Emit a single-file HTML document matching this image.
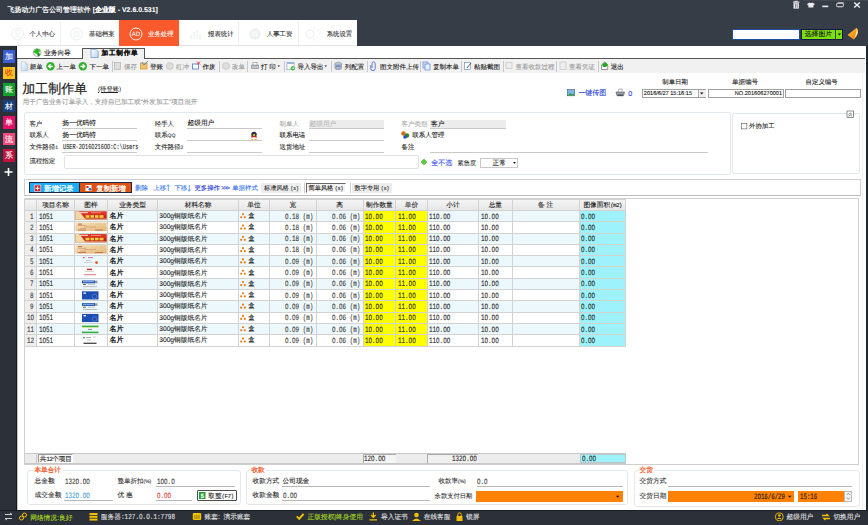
<!DOCTYPE html><html><head><meta charset="utf-8"><style>
*{margin:0;padding:0;box-sizing:border-box}
html,body{width:868px;height:525px;overflow:hidden;background:#fff}
body{position:relative;font-family:"Liberation Sans",sans-serif;font-size:6.7px;font-weight:500;color:#222;-webkit-text-stroke-width:0.1px;text-rendering:geometricPrecision}
div{position:absolute}
.t{white-space:nowrap;line-height:8px;transform:translateY(-4px)}
.m{font-family:"Liberation Mono",monospace}
.n{white-space:nowrap;line-height:8px;font-family:"Liberation Mono",monospace;transform-origin:0 50%;-webkit-text-stroke-width:0.1px;font-weight:400}
svg{position:absolute;overflow:visible}
</style></head><body>
<div style="left:0px;top:0px;width:868px;height:46px;background:#373d47"></div>
<div class="t" style="left:7.5px;top:11.0px;color:#fff;font-size:6.95px"><span style='font-weight:500;-webkit-text-stroke-width:0.2px'>飞扬动力广告公司管理软件</span> <b>[企业版 - V2.6.0.531]</b></div>
<svg style="left:0;top:0" width="868" height="20">
<rect x="803" y="0" width="65" height="0.8" fill="#454b55"/>
<g fill="#ececec">
<rect x="793" y="1.6" width="6.4" height="1.1"/><rect x="794.6" y="0.8" width="3.2" height="1"/><rect x="793.5" y="3.2" width="5.4" height="5.4"/>
<path d="M807.6 3.6 L809.8 2.6 L810.9 3.3 L812 2.6 L814.2 3.6 L814.6 5 L813.4 5.3 L813.4 7.6 L808.4 7.6 L808.4 5.3 L807.2 5 Z"/>
<rect x="822.3" y="5.6" width="6" height="1.6"/>
</g>
<g fill="#2e333c" opacity="0.9"><rect x="795" y="4" width="0.6" height="3.8"/><rect x="796.8" y="4" width="0.6" height="3.8"/></g>
<rect x="836.6" y="3.2" width="6.8" height="3.6" rx="1.2" fill="none" stroke="#e8e8e8" stroke-width="1"/>
<path d="M838 2.6 h5 a1 1 0 0 1 1 1" stroke="#e8e8e8" stroke-width="0.6" fill="none"/>
<path d="M854.2 2.4 L859.8 7.6 M859.8 2.4 L854.2 7.6" stroke="#f2f2f2" stroke-width="1.4"/>
</svg>
<div style="left:0px;top:20px;width:357px;height:26px;background:#fff;border-bottom:1px solid #e2e4e8"></div>
<div class="t" style="left:29.4px;top:35.0px;color:#333;font-size:6.4px;font-weight:400">个人中心</div>
<div style="left:59.5px;top:21px;width:1px;height:24px;background:#eef0f2"></div>
<div class="t" style="left:89px;top:35.0px;color:#333;font-size:6.4px;font-weight:400">基础档案</div>
<div style="left:119px;top:20px;width:59.5px;height:26px;background:#fa5a2c"></div>
<div class="t" style="left:148px;top:35.0px;color:#fff;font-size:6.4px;font-weight:400">业务处理</div>
<div style="left:178.5px;top:21px;width:1px;height:24px;background:#eef0f2"></div>
<div class="t" style="left:208px;top:35.0px;color:#333;font-size:6.4px;font-weight:400">报表统计</div>
<div style="left:238.0px;top:21px;width:1px;height:24px;background:#eef0f2"></div>
<div class="t" style="left:266.8px;top:35.0px;color:#333;font-size:6.4px;font-weight:400">人事工资</div>
<div style="left:297.5px;top:21px;width:1px;height:24px;background:#eef0f2"></div>
<div class="t" style="left:326.7px;top:35.0px;color:#333;font-size:6.4px;font-weight:400">系统设置</div>
<svg style="left:0;top:0" width="360" height="46">
<g fill="none" stroke="#eceeef" stroke-width="1">
<circle cx="17.5" cy="34" r="6"/><circle cx="17.5" cy="32.3" r="2.2"/><path d="M13.6 38.3 Q17.5 33.8 21.4 38.3"/>
<circle cx="76.5" cy="34" r="6"/><path d="M73.3 31 h6.4 M73.3 33 h6.4 M73.3 35 h6.4 M73.3 37 h6.4" stroke-width="0.8"/>
<path d="M191 39 v-4 M194 39 v-7 M197 39 v-9 M200 39 v-5" stroke-width="1.2"/>
<path d="M310 34 m-4 0 a4 4 0 1 0 8 0 a4 4 0 1 0 -8 0 M314 27.5 v2 M314 38.5 v2 M307.5 34 h2 M318.5 34 h2 M309.5 29.5 l1.4 1.4 M317.1 37.1 l1.4 1.4 M309.5 38.5 l1.4 -1.4 M317.1 30.9 l1.4 -1.4"/>
</g>
<circle cx="255" cy="34" r="5.8" fill="#eef0f1"/>
<path d="M253 31.5 v5 M255 31 v6 M257 31.5 v5" stroke="#fff" stroke-width="0.8"/>
<circle cx="136" cy="34" r="6" fill="none" stroke="#fff" stroke-width="0.9"/>
<text x="136" y="36.3" font-size="6.2" fill="#fff" text-anchor="middle" font-family="Liberation Sans">AD</text>
</svg>
<div style="left:731.8px;top:28.8px;width:68.5px;height:11.5px;background:#fff;border:1.2px solid #1e4f9c"></div>
<div style="left:800.9px;top:28.6px;width:42.5px;height:11.8px;background:#7ee00a;border:1px solid #141a48"></div>
<div style="left:835.2px;top:29.5px;width:1px;height:10px;background:#2a4a10"></div>
<div class="t" style="left:804.8px;top:35.3px;color:#111;font-size:6.8px">选择图片</div>
<svg style="left:0;top:0" width="868" height="46">
<path d="M837.8 33.6 h3.2 l-1.6 1.8 z" fill="#111"/>
<defs><linearGradient id="mg" x1="0" y1="0" x2="1" y2="1"><stop offset="0" stop-color="#ffd070"/><stop offset="0.5" stop-color="#f7a018"/><stop offset="1" stop-color="#e07000"/></linearGradient></defs>
<path d="M847.6 35 L856.6 27.8 Q860.5 33 853.6 39.6 Z" fill="url(#mg)"/><path d="M856.6 27.8 Q860.5 33 853.6 39.6 Q857 33 856.6 27.8 Z" fill="#ffe6a8"/>

</svg>
<div style="left:0px;top:46px;width:17px;height:464px;background:#2c3039"></div>
<div style="left:15.8px;top:46px;width:1.4px;height:464px;background:#161a24"></div>
<div style="left:2.6px;top:50.1px;width:12.6px;height:12.6px;background:#3a5ed6"></div>
<div class="t" style="left:4.9px;top:56.9px;color:#fff;font-size:8px;line-height:10px;transform:translateY(-5px)">加</div>
<div style="left:2.6px;top:66.65px;width:12.6px;height:12.6px;background:#f6c41c"></div>
<div class="t" style="left:4.9px;top:73.45px;color:#e8401a;font-size:8px;line-height:10px;transform:translateY(-5px)">收</div>
<div style="left:2.6px;top:83.2px;width:12.6px;height:12.6px;background:#12a02a"></div>
<div class="t" style="left:4.9px;top:90.0px;color:#fff;font-size:8px;line-height:10px;transform:translateY(-5px)">账</div>
<div style="left:2.6px;top:99.75px;width:12.6px;height:12.6px;background:#1b3f7c"></div>
<div class="t" style="left:4.9px;top:106.55px;color:#fff;font-size:8px;line-height:10px;transform:translateY(-5px)">材</div>
<div style="left:2.6px;top:116.30000000000001px;width:12.6px;height:12.6px;background:#e60f68"></div>
<div class="t" style="left:4.9px;top:123.10000000000001px;color:#fff;font-size:8px;line-height:10px;transform:translateY(-5px)">单</div>
<div style="left:2.6px;top:132.85px;width:12.6px;height:12.6px;background:#ef4a7c"></div>
<div class="t" style="left:4.9px;top:139.65px;color:#fff;font-size:8px;line-height:10px;transform:translateY(-5px)">流</div>
<div style="left:2.6px;top:149.4px;width:12.6px;height:12.6px;background:#c2123c"></div>
<div class="t" style="left:4.9px;top:156.20000000000002px;color:#fff;font-size:8px;line-height:10px;transform:translateY(-5px)">系</div>
<svg style="left:0;top:0" width="17" height="200"><path d="M4.5 172 h8 M8.5 168 v8" stroke="#fff" stroke-width="1.6"/></svg>
<div style="left:866px;top:46px;width:2px;height:464px;background:#22262e"></div>
<div style="left:17px;top:46px;width:849px;height:464px;background:#fff"></div>
<div style="left:862px;top:73px;width:0.8px;height:437px;background:#f2f2f2"></div>
<div style="left:17px;top:59px;width:1px;height:451px;background:#c4c4c4"></div>
<div style="left:17px;top:58px;width:65px;height:1.2px;background:#555"></div>
<div style="left:145px;top:58px;width:720px;height:1.2px;background:#555"></div>
<div style="left:82px;top:48px;width:63px;height:11.5px;background:#f1f1f1;border:1px solid #555;border-bottom:none;border-radius:1px 1px 0 0"></div>
<div class="t" style="left:44px;top:54.0px;color:#222;font-size:6.7px;font-weight:400">业务向导</div>
<div class="t" style="left:101.6px;top:54.2px;color:#111;font-weight:bold;font-size:6.6px;letter-spacing:0.75px;-webkit-text-stroke-width:0.15px">加工制作单</div>
<svg style="left:0;top:0" width="200" height="60">
<circle cx="37.2" cy="52.6" r="3.9" fill="#fff" stroke="#777" stroke-width="0.6"/><path d="M33.2 52 L36.5 48.6 L38.8 49.2 L40.3 51 L37 54.2 Z" fill="#28b820"/><ellipse cx="38.6" cy="54.6" rx="1.3" ry="1.8" fill="#1a8a1a"/>
<path d="M91 49.3 h4.8 l2.4 2.4 v5.8 h-7.2 z" fill="url(#dg)" stroke="#5a86c0" stroke-width="0.6"/>
</svg>
<div style="left:18px;top:59px;width:847px;height:14px;background:#f1f1f1"></div>
<div class="t" style="left:29.7px;top:67.6px;color:#222;font-size:6.5px">新单</div>
<div class="t" style="left:56.6px;top:67.6px;color:#222;font-size:6.5px">上一单</div>
<div class="t" style="left:89.6px;top:67.6px;color:#222;font-size:6.5px">下一单</div>
<div class="t" style="left:124px;top:67.6px;color:#999;font-size:6.5px">保存</div>
<div class="t" style="left:150px;top:67.6px;color:#222;font-size:6.5px">登账</div>
<div class="t" style="left:176px;top:67.6px;color:#999;font-size:6.5px">红冲</div>
<div class="t" style="left:202.5px;top:67.6px;color:#222;font-size:6.5px">作废</div>
<div class="t" style="left:231.9px;top:67.6px;color:#999;font-size:6.5px">改单</div>
<div class="t" style="left:261px;top:67.6px;color:#222;font-size:6.5px">打 印</div>
<div class="t" style="left:297.6px;top:67.6px;color:#222;font-size:6.5px">导入导出</div>
<div class="t" style="left:344.8px;top:67.6px;color:#222;font-size:6.5px">列配置</div>
<div class="t" style="left:380px;top:67.6px;color:#222;font-size:6.5px">图文附件上传</div>
<div class="t" style="left:433px;top:67.6px;color:#222;font-size:6.5px">复制本单</div>
<div class="t" style="left:474px;top:67.6px;color:#222;font-size:6.5px">粘贴截图</div>
<div class="t" style="left:515.6px;top:67.6px;color:#999;font-size:6.5px">查看收款过程</div>
<div class="t" style="left:569px;top:67.6px;color:#999;font-size:6.5px">查看凭证</div>
<div class="t" style="left:610.7px;top:67.6px;color:#222;font-size:6.5px">退出</div>
<div style="left:111.5px;top:60.5px;width:1px;height:11px;background:#c8c8c8"></div>
<div style="left:218.8px;top:60.5px;width:1px;height:11px;background:#c8c8c8"></div>
<div style="left:247.3px;top:60.5px;width:1px;height:11px;background:#c8c8c8"></div>
<div style="left:284.2px;top:60.5px;width:1px;height:11px;background:#c8c8c8"></div>
<div style="left:331px;top:60.5px;width:1px;height:11px;background:#c8c8c8"></div>
<div style="left:367.4px;top:60.5px;width:1px;height:11px;background:#c8c8c8"></div>
<div style="left:420px;top:60.5px;width:1px;height:11px;background:#c8c8c8"></div>
<div style="left:461.4px;top:60.5px;width:1px;height:11px;background:#c8c8c8"></div>
<div style="left:502.8px;top:60.5px;width:1px;height:11px;background:#c8c8c8"></div>
<div style="left:556px;top:60.5px;width:1px;height:11px;background:#c8c8c8"></div>
<div style="left:597.7px;top:60.5px;width:1px;height:11px;background:#c8c8c8"></div>
<svg style="left:0;top:0" width="700" height="80">
<defs><linearGradient id="dg" x1="0" y1="0" x2="1" y2="1"><stop offset="0" stop-color="#ffffff"/><stop offset="1" stop-color="#b8d4f0"/></linearGradient></defs><path d="M21.3 62 h4.2 l2.2 2.2 v6.4 h-6.4 z" fill="url(#dg)" stroke="#9ab4d8" stroke-width="0.5"/><path d="M25.5 62 v2.2 h2.2" fill="#dbe8f6" stroke="#9ab4d8" stroke-width="0.4"/>
<circle cx="50.5" cy="66.3" r="4.2" fill="#34b030"/><path d="M52.8 66.3 h-4.2 m2 -2 l-2 2 l2 2" stroke="#fff" stroke-width="1.3" fill="none"/>
<circle cx="82.8" cy="66.3" r="4.2" fill="#34b030"/><path d="M80.4 66.3 h4.2 m-2 -2 l2 2 l-2 2" stroke="#fff" stroke-width="1.3" fill="none"/>
<rect x="114.5" y="62.5" width="6" height="7" fill="#ddd" stroke="#aaa" stroke-width="0.6"/>
<rect x="140.5" y="63" width="6.5" height="6" fill="#f3c36a" stroke="#c58a2a" stroke-width="0.6"/><path d="M142 62 l2 3 l4 -4" stroke="#3a7ad0" stroke-width="0.8" fill="none"/>
<circle cx="169.8" cy="66" r="3.5" fill="#ddd" stroke="#bbb" stroke-width="0.6"/>
<rect x="192.5" y="64" width="6" height="5" fill="#fff" stroke="#3a6ac0" stroke-width="0.7"/><path d="M197 61.5 l3 3 m0 -3 l-3 3" stroke="#e02020" stroke-width="0.9"/>
<circle cx="226" cy="66" r="3.5" fill="#ddd" stroke="#bbb" stroke-width="0.6"/>
<path d="M251.5 65 h7 v3.5 h-7 z" fill="#bfc6cf" stroke="#6b7380" stroke-width="0.5"/><rect x="253" y="62.5" width="4" height="2.5" fill="#fff" stroke="#777" stroke-width="0.5"/>
<path d="M277.5 65.5 h2.5 l-1.25 1.5 z" fill="#222"/>
<rect x="287" y="62.3" width="7" height="7.4" fill="#fff" stroke="#7a9ac0" stroke-width="0.6"/><rect x="287" y="62.3" width="7" height="1.6" fill="#8fb0d8"/><circle cx="292.8" cy="68.3" r="2.1" fill="#38b038"/><path d="M291.6 68.3 h2.4 m-1 -1 l1 1 l-1 1" stroke="#fff" stroke-width="0.6" fill="none"/>
<path d="M324.5 65.5 h2.5 l-1.25 1.5 z" fill="#222"/>
<ellipse cx="338.2" cy="63.6" rx="3.3" ry="1.4" fill="#c9d6e6" stroke="#6a7f9a" stroke-width="0.5"/><path d="M334.9 63.6 v4.6 a3.3 1.4 0 0 0 6.6 0 v-4.6" fill="#a8b4c4" stroke="#6a7f9a" stroke-width="0.5"/><rect x="336" y="65.5" width="4.5" height="1" fill="#4a7acc"/>
<path d="M372 68 v-4.5 a1.6 1.6 0 0 1 3.2 0 v5 a2.2 2.2 0 0 1 -4.4 0 v-3.5" fill="none" stroke="#3a62c8" stroke-width="0.8"/>
<rect x="423" y="62" width="5" height="6" fill="#cfe0f6" stroke="#4a7acc" stroke-width="0.6"/><rect x="425" y="64" width="5" height="6" fill="#e7f0fb" stroke="#4a7acc" stroke-width="0.6"/>
<rect x="464.5" y="62.5" width="6" height="7" fill="#fff" stroke="#5a86c0" stroke-width="0.6"/><path d="M467 68 l4 -5" stroke="#333" stroke-width="0.8"/>
<rect x="506" y="62.5" width="6" height="6" fill="#eee" stroke="#bbb" stroke-width="0.6"/>
<rect x="560" y="62" width="6" height="7.5" fill="#eee" stroke="#bbb" stroke-width="0.6"/>
<path d="M601.5 65 L604.6 62 L607.7 65 L607.7 69.5 L601.5 69.5 Z" fill="#fff" stroke="#555" stroke-width="0.6"/><path d="M602 64.5 L605 62 L608 64.5 L606 67 L603 67 Z" fill="#2aa52a"/>
</svg>
<div class="t" style="left:22.3px;top:89.3px;color:#222;font-size:13px;line-height:14px;transform:translateY(-7px);-webkit-text-stroke-width:0.2px">加工制作单</div>
<div class="t" style="left:98px;top:89.8px;color:#222;font-size:6.3px;-webkit-text-stroke-width:0.05px"><span style="text-decoration:underline">(待登账)</span></div>
<div class="t" style="left:22.8px;top:103.0px;color:#999;font-size:6.55px;-webkit-text-stroke-width:0.1px">用于广告业务订单录入，支持自已加工或“外发加工”项目混开</div>
<svg style="left:0;top:0" width="868" height="110">
<rect x="567.3" y="89.6" width="7.4" height="6.2" fill="#7ab8e8" stroke="#4a5a70" stroke-width="0.6"/><path d="M567.6 95.5 l2.5 -2.6 l1.8 1.6 l1.4 -1 l1.1 1 v1 z" fill="#3a9a4a"/>
<path d="M616 92 h8.5 l-1 3.8 h-6.5 z" fill="#9aa4b0" stroke="#4b5460" stroke-width="0.6"/><path d="M618 92 l1 -3 h3.5 l-1 3 z" fill="#fff" stroke="#666" stroke-width="0.5"/><rect x="617.5" y="94.5" width="5.5" height="1.3" fill="#444"/>
</svg>
<div class="t" style="left:578.4px;top:94.0px;color:#1c3ed4;font-size:6.95px">一键传图</div>
<div class="t" style="left:628.3px;top:94.3px;color:#1a36e0;font-size:7.2px">0</div>
<div class="t" style="left:662.3px;top:83.3px;color:#222;font-size:6.4px">制单日期</div>
<div class="t" style="left:732px;top:83.3px;color:#222;font-size:6.5px">单据编号</div>
<div class="t" style="left:805.5px;top:83.3px;color:#222;font-size:6.45px">自定义编号</div>
<div style="left:642px;top:88.5px;width:64px;height:9.5px;background:#fff;border:1px solid #a0a0a0"></div>
<div style="left:698px;top:89.5px;width:7.5px;height:7.5px;background:#f0f0f0;border-left:1px solid #aaa"></div>
<svg style="left:0;top:0" width="868" height="110"><path d="M700 92.5 h3.5 l-1.75 2 z" fill="#111"/></svg>
<div class="t" style="left:643.8px;top:94.2px;color:#111;font-size:5.6px;font-family:'Liberation Sans'">2016/6/27 15:16:15</div>
<div style="left:708px;top:88.5px;width:75.5px;height:9.5px;background:#fff;border:1px solid #a0a0a0"></div>
<div class="t" style="left:734.8px;top:94.2px;color:#222;font-size:5.6px">NO.201606270001</div>
<div style="left:785px;top:88.5px;width:75.5px;height:9.5px;background:#fff;border:1px solid #a0a0a0"></div>
<div style="left:23.5px;top:112.3px;width:707.5px;height:62.5px;border:1px solid #e3e8ee;border-radius:2px;background:#fff"></div>
<div style="left:732.3px;top:112.5px;width:127.5px;height:61.5px;border:1px solid #e3e8ee;border-radius:2px;background:#fff"></div>
<div class="t" style="left:29.4px;top:124.5px;color:#333;font-size:6.45px">客户</div>
<div class="t" style="left:29.4px;top:136.0px;color:#333;font-size:6.45px">联系人</div>
<div class="t" style="left:29.4px;top:147.8px;color:#333;font-size:6.45px">文件路径<span style='font-size:5px'>1</span></div>
<div class="t" style="left:29.4px;top:161.7px;color:#333;font-size:6.45px">流程指定</div>
<div class="t" style="left:154.7px;top:124.5px;color:#333;font-size:6.45px">经手人</div>
<div class="t" style="left:154.7px;top:136.0px;color:#333;font-size:6.45px">联系<span style='font-size:5px'>QQ</span></div>
<div class="t" style="left:154.7px;top:147.8px;color:#333;font-size:6.45px">文件路径<span style='font-size:5px'>2</span></div>
<div class="t" style="left:279.5px;top:124.5px;color:#aaa;font-size:6.45px">制单人</div>
<div class="t" style="left:279.5px;top:136.0px;color:#222;font-size:6.45px">联系电话</div>
<div class="t" style="left:279.5px;top:147.8px;color:#222;font-size:6.45px">送货地址</div>
<div class="t" style="left:401.6px;top:124.5px;color:#aaa;font-size:6.45px">客户类别</div>
<div class="t" style="left:412.3px;top:136.0px;color:#222;font-size:6.45px">联系人管理</div>
<div class="t" style="left:401.6px;top:147.8px;color:#222;font-size:6.45px">备注</div>
<div style="left:62px;top:127.8px;width:75px;height:1.3px;background:#c9c9c9"></div>
<div style="left:62px;top:139.5px;width:75px;height:1.3px;background:#c9c9c9"></div>
<div style="left:62px;top:151.5px;width:75px;height:1.3px;background:#c9c9c9"></div>
<div style="left:186.7px;top:127.8px;width:75px;height:1.3px;background:#c9c9c9"></div>
<div style="left:186.7px;top:139.5px;width:75px;height:1.3px;background:#c9c9c9"></div>
<div style="left:186.7px;top:151.5px;width:75px;height:1.3px;background:#c9c9c9"></div>
<div style="left:309px;top:127.8px;width:75px;height:1.3px;background:#c9c9c9"></div>
<div style="left:309px;top:139.5px;width:75px;height:1.3px;background:#c9c9c9"></div>
<div style="left:309px;top:151.5px;width:75px;height:1.3px;background:#c9c9c9"></div>
<div style="left:430px;top:127.8px;width:76px;height:1.3px;background:#c9c9c9"></div>
<div style="left:430px;top:151.5px;width:278px;height:1.3px;background:#c9c9c9"></div>
<div style="left:309px;top:120px;width:75px;height:8px;background:#ececec"></div>
<div style="left:430px;top:120px;width:76px;height:8px;background:#ececec"></div>
<div class="t" style="left:62.5px;top:124.3px;color:#222;font-size:6.7px">扬一优码特</div>
<div class="t" style="left:62.5px;top:136.0px;color:#222;font-size:6.7px">扬一优码特</div>
<div class="n" style="left:62.5px;top:148.3px;color:#222;font-size:7.6px;transform:translateY(-4px) scaleX(0.69);">USER-2O16O216OO:C:\Users</div>
<div class="t" style="left:187.5px;top:124.3px;color:#222;font-size:6.7px">超级用户</div>
<div class="t" style="left:309.5px;top:124.5px;color:#bbb;font-size:6.7px">超级用户</div>
<div class="t" style="left:431px;top:124.5px;color:#222;font-size:6.7px">客户</div>
<div style="left:64px;top:154.5px;width:354.5px;height:14px;border:1px solid #dfe3e8;border-radius:2px;background:#fff"></div>
<div class="t" style="left:431.3px;top:163.6px;color:#3a4ef0;font-size:7px">全不选</div>
<div class="t" style="left:457.6px;top:163.6px;color:#333;font-size:6.2px">紧急度</div>
<div style="left:480.2px;top:158.4px;width:38.3px;height:9.3px;border:1px solid #c8c8c8;background:#fff"></div>
<div class="t" style="left:492.5px;top:164.0px;color:#222;font-size:6.7px">正常</div>
<svg style="left:0;top:0" width="868" height="180">
<path d="M513 162 h3 l-1.5 1.8 z" fill="#111"/>
<path d="M424 159 l3 3 l-3 3 l-3 -3 z" fill="#5cc83a" stroke="#3a9a22" stroke-width="0.4"/>
<ellipse cx="254" cy="134.6" rx="2.7" ry="2.8" fill="#2a2a4a"/><ellipse cx="254" cy="135" rx="1.3" ry="1" fill="#f0c020"/><rect x="251.2" y="136.2" width="5.6" height="1.4" fill="#e02818"/><ellipse cx="254" cy="138.3" rx="1.9" ry="1.1" fill="#fff"/><ellipse cx="252.3" cy="139.5" rx="1.2" ry="0.6" fill="#f0a020"/><ellipse cx="255.7" cy="139.5" rx="1.2" ry="0.6" fill="#f0a020"/>
<circle cx="403.5" cy="133.5" r="2.2" fill="#d56a1a"/><circle cx="407" cy="135.5" r="2.2" fill="#2a8a2a"/><circle cx="405" cy="137" r="1.8" fill="#2a4ac8"/>
<rect x="741.3" y="123.3" width="5.6" height="5.6" fill="#fff" stroke="#555" stroke-width="0.6"/>
<rect x="847" y="111" width="6.5" height="6.5" fill="#fff" stroke="#444" stroke-width="0.6"/>
<path d="M848.5 114.5 l1.75 -1.5 l1.75 1.5 M848.5 116.3 l1.75 -1.5 l1.75 1.5" stroke="#333" stroke-width="0.6" fill="none"/>
</svg>
<div class="t" style="left:749px;top:127.0px;color:#222;font-size:6.4px">外协加工</div>
<div style="left:23.5px;top:178.7px;width:837px;height:17.3px;border:1px solid #cfcfcf;border-bottom:1px solid #bdbdbd;background:#fff"></div>
<div style="left:29px;top:182.2px;width:51px;height:11.2px;background:#1eacf6;border:1px solid #1b2a48"></div>
<div style="left:80px;top:182.2px;width:51.8px;height:11.2px;background:#e0520f;border:1px solid #1b2a48;border-left:none"></div>
<svg style="left:0;top:0" width="868" height="200">
<rect x="34.3" y="185" width="6.5" height="6.5" fill="#e01e2a" stroke="#fff" stroke-width="0.5"/><path d="M37.55 186.3 v4 M35.55 188.3 h4" stroke="#fff" stroke-width="1"/>
<rect x="85.5" y="185" width="6" height="6" fill="#fff"/><circle cx="87.5" cy="187" r="1.3" fill="#e0302a"/><circle cx="90" cy="189.3" r="1.4" fill="#2a6ad0"/>
</svg>
<div class="t" style="left:44px;top:189.2px;color:#fff;font-size:7.4px;-webkit-text-stroke-width:0.25px">新增记录</div>
<div class="t" style="left:96.3px;top:189.2px;color:#fff;font-size:7.4px;-webkit-text-stroke-width:0.25px">复制新增</div>
<div class="t" style="left:135px;top:188.8px;color:#3c78e8;font-size:6.4px">删除</div>
<div class="t" style="left:153.4px;top:188.8px;color:#3c78e8;font-size:6.4px">上移</div>
<div class="t" style="left:174.4px;top:188.8px;color:#3c78e8;font-size:6.4px">下移</div>
<div class="t" style="left:194.4px;top:188.8px;color:#2238d8;font-size:6.4px">更多操作<span style="font-size:6.5px;font-family:Liberation Mono;letter-spacing:-1.2px;margin-left:1px">&gt;&gt;&gt;</span></div>
<div class="t" style="left:232.3px;top:188.8px;color:#3c78e8;font-size:6.4px">单据样式</div>
<svg style="left:0;top:0" width="868" height="200"><g stroke="#3c78e8" stroke-width="0.7" fill="none">
<path d="M168.3 191 v-6 M166.8 186.5 l1.5 -1.8 l1.5 1.8"/><path d="M189.3 185 v6 M187.8 189.5 l1.5 1.8 l1.5 -1.8"/></g></svg>
<div style="left:261.4px;top:183.3px;width:40px;height:9.3px;background:#ececec"></div>
<div class="t" style="left:264px;top:189.0px;color:#333;font-size:6.2px">标准风格<span style="font-size:5.4px;font-family:Liberation Mono;letter-spacing:-0.5px;margin-left:1.5px">(s)</span></div>
<div style="left:303.5px;top:183.3px;width:1px;height:9.3px;background:#ccc"></div>
<div style="left:306px;top:183.3px;width:40px;height:9.3px;background:#f4f4f4;border-top:1px solid #666;border-left:1px solid #666;border-right:1px solid #fff;border-bottom:1px solid #fff"></div>
<div class="t" style="left:308.5px;top:189.2px;color:#222;font-size:6.2px">简单风格<span style="font-size:5.4px;font-family:Liberation Mono;letter-spacing:-0.5px;margin-left:1.5px">(s)</span></div>
<div style="left:349.5px;top:183.3px;width:1px;height:9.3px;background:#ccc"></div>
<div style="left:352px;top:183.3px;width:40px;height:9.3px;background:#ececec"></div>
<div class="t" style="left:354.5px;top:189.0px;color:#333;font-size:6.2px">数字专用<span style="font-size:5.4px;font-family:Liberation Mono;letter-spacing:-0.5px;margin-left:1.5px">(s)</span></div>
<div style="left:24.3px;top:198.3px;width:835px;height:266.5px;border:1px solid #cfcfcf;background:#fff"></div>
<div style="left:24.3px;top:198.8px;width:601.9000000000001px;height:11.599999999999994px;background:linear-gradient(#f6f6f6,#e6e6e6)"></div>
<div class="t" style="left:30.450000000000003px;top:205.6px;color:#222;font-size:6.7px;transform:translate(-50%,-4px)"></div>
<div class="t" style="left:55.55px;top:205.6px;color:#222;font-size:6.7px;transform:translate(-50%,-4px)">项目名称</div>
<div class="t" style="left:90.9px;top:205.6px;color:#222;font-size:6.7px;transform:translate(-50%,-4px)">图样</div>
<div class="t" style="left:132.55px;top:205.6px;color:#222;font-size:6.7px;transform:translate(-50%,-4px)">业务类型</div>
<div class="t" style="left:198.10000000000002px;top:205.6px;color:#222;font-size:6.7px;transform:translate(-50%,-4px)">材料名称</div>
<div class="t" style="left:253.89999999999998px;top:205.6px;color:#222;font-size:6.7px;transform:translate(-50%,-4px)">单位</div>
<div class="t" style="left:292.79999999999995px;top:205.6px;color:#222;font-size:6.7px;transform:translate(-50%,-4px)">宽</div>
<div class="t" style="left:339.6px;top:205.6px;color:#222;font-size:6.7px;transform:translate(-50%,-4px)">高</div>
<div class="t" style="left:379.4px;top:205.6px;color:#222;font-size:6.7px;transform:translate(-50%,-4px)">制作数量</div>
<div class="t" style="left:411.45000000000005px;top:205.6px;color:#222;font-size:6.7px;transform:translate(-50%,-4px)">单价</div>
<div class="t" style="left:452.9px;top:205.6px;color:#222;font-size:6.7px;transform:translate(-50%,-4px)">小计</div>
<div class="t" style="left:495.35px;top:205.6px;color:#222;font-size:6.7px;transform:translate(-50%,-4px)">总量</div>
<div class="t" style="left:545.7px;top:205.6px;color:#222;font-size:6.7px;transform:translate(-50%,-4px)">备 注</div>
<div class="t" style="left:602.5999999999999px;top:205.6px;color:#222;font-size:6.7px;transform:translate(-50%,-4px)">图像面积<span style='font-family:Liberation Mono;font-size:6px;letter-spacing:-0.7px'>(m2)</span></div>
<div style="left:36.6px;top:210.4px;width:589.1999999999999px;height:11.3px;background:#edf8fc"></div>
<div style="left:24.3px;top:210.4px;width:12.3px;height:11.3px;background:#eeeeee"></div>
<div style="left:363px;top:210.4px;width:64.10000000000002px;height:11.3px;background:#ffff00"></div>
<div style="left:579.4px;top:210.4px;width:46.39999999999998px;height:11.3px;background:#9ef2fc"></div>
<div class="n" style="left:30.0576px;top:217.55px;color:#333;font-size:8.2px;transform:translateY(-4px) scaleX(0.72);">1</div>
<div class="n" style="left:38.6px;top:217.55px;color:#222;font-size:8.2px;transform:translateY(-4px) scaleX(0.72);">1O51</div>
<div class="t" style="left:109.5px;top:217.05px;color:#111;font-size:7px;font-weight:700;-webkit-text-stroke-width:0">名片</div>
<div class="t" style="left:159.2px;top:217.05px;color:#222;font-size:6.7px">300g铜版纸名片</div>
<div class="t" style="left:248px;top:217.05px;color:#222;font-size:6.9px;font-weight:400;-webkit-text-stroke-width:0.05px">盒</div>
<div class="n" style="left:284.6608px;top:217.55px;color:#333;font-size:8.2px;transform:translateY(-4px) scaleX(0.72);">O.18 (m)</div>
<div class="n" style="left:331.6608px;top:217.55px;color:#333;font-size:8.2px;transform:translateY(-4px) scaleX(0.72);">O.O6 (m)</div>
<div class="n" style="left:365px;top:217.55px;color:#222;font-size:8.2px;transform:translateY(-4px) scaleX(0.72);">1O.OO</div>
<div class="n" style="left:397.8px;top:217.55px;color:#222;font-size:8.2px;transform:translateY(-4px) scaleX(0.72);">11.OO</div>
<div class="n" style="left:429.1px;top:217.55px;color:#222;font-size:8.2px;transform:translateY(-4px) scaleX(0.72);">11O.OO</div>
<div class="n" style="left:480.7px;top:217.55px;color:#222;font-size:8.2px;transform:translateY(-4px) scaleX(0.72);">1O.OO</div>
<div class="n" style="left:581.4px;top:217.55px;color:#222;font-size:8.2px;transform:translateY(-4px) scaleX(0.72);">O.OO</div>
<svg style="left:0;top:0" width="1" height="1"><g fill="#e8780c"><circle cx="243" cy="214.25" r="1.1"/><circle cx="241.2" cy="217.25" r="1.1"/><circle cx="244.8" cy="217.25" r="1.1"/></g></svg>
<svg style="left:0;top:0" width="1" height="1"><defs><linearGradient id="rg0" x1="0" y1="0" x2="0" y2="1"><stop offset="0" stop-color="#e4402a"/><stop offset="1" stop-color="#b8180e"/></linearGradient></defs>
<rect x="75.3" y="211.20000000000002" width="31.4" height="8.6" fill="url(#rg0)"/>
<path d="M75.3 211.20000000000002 L79 211.20000000000002 L86 219.8 L75.3 219.8 Z" fill="#f0d9a8"/>
<path d="M75.3 219.8 L106.7 219.8 L106.7 218.6 L84 218.6 Z" fill="#e8c890" opacity="0.8"/>
<rect x="80" y="212.20000000000002" width="8" height="1" fill="#fff" opacity="0.85"/><rect x="91" y="212.4" width="10" height="0.7" fill="#f4a090"/>
<rect x="85.5" y="215.20000000000002" width="4" height="2.6" fill="#f0d040"/><rect x="90.5" y="215.20000000000002" width="3.5" height="2.6" fill="#f0d040"/><rect x="95" y="215.20000000000002" width="3.5" height="2.6" fill="#f0d040"/><rect x="99.5" y="215.20000000000002" width="4" height="2.6" fill="#f0d040"/>
</svg>
<div style="left:36.6px;top:221.70000000000002px;width:589.1999999999999px;height:11.3px;background:#fff"></div>
<div style="left:24.3px;top:221.70000000000002px;width:12.3px;height:11.3px;background:#eeeeee"></div>
<div style="left:363px;top:221.70000000000002px;width:64.10000000000002px;height:11.3px;background:#ffff00"></div>
<div style="left:579.4px;top:221.70000000000002px;width:46.39999999999998px;height:11.3px;background:#9ef2fc"></div>
<div class="n" style="left:30.0576px;top:228.85000000000002px;color:#333;font-size:8.2px;transform:translateY(-4px) scaleX(0.72);">2</div>
<div class="n" style="left:38.6px;top:228.85000000000002px;color:#222;font-size:8.2px;transform:translateY(-4px) scaleX(0.72);">1O51</div>
<div class="t" style="left:109.5px;top:228.35000000000002px;color:#111;font-size:7px;font-weight:700;-webkit-text-stroke-width:0">名片</div>
<div class="t" style="left:159.2px;top:228.35000000000002px;color:#222;font-size:6.7px">300g铜版纸名片</div>
<div class="t" style="left:248px;top:228.35000000000002px;color:#222;font-size:6.9px;font-weight:400;-webkit-text-stroke-width:0.05px">盒</div>
<div class="n" style="left:284.6608px;top:228.85000000000002px;color:#333;font-size:8.2px;transform:translateY(-4px) scaleX(0.72);">O.18 (m)</div>
<div class="n" style="left:331.6608px;top:228.85000000000002px;color:#333;font-size:8.2px;transform:translateY(-4px) scaleX(0.72);">O.O6 (m)</div>
<div class="n" style="left:365px;top:228.85000000000002px;color:#222;font-size:8.2px;transform:translateY(-4px) scaleX(0.72);">1O.OO</div>
<div class="n" style="left:397.8px;top:228.85000000000002px;color:#222;font-size:8.2px;transform:translateY(-4px) scaleX(0.72);">11.OO</div>
<div class="n" style="left:429.1px;top:228.85000000000002px;color:#222;font-size:8.2px;transform:translateY(-4px) scaleX(0.72);">11O.OO</div>
<div class="n" style="left:480.7px;top:228.85000000000002px;color:#222;font-size:8.2px;transform:translateY(-4px) scaleX(0.72);">1O.OO</div>
<div class="n" style="left:581.4px;top:228.85000000000002px;color:#222;font-size:8.2px;transform:translateY(-4px) scaleX(0.72);">O.OO</div>
<svg style="left:0;top:0" width="1" height="1"><g fill="#e8780c"><circle cx="243" cy="225.55" r="1.1"/><circle cx="241.2" cy="228.55" r="1.1"/><circle cx="244.8" cy="228.55" r="1.1"/></g></svg>
<svg style="left:0;top:0" width="1" height="1"><defs><linearGradient id="bg1" x1="0" y1="0" x2="1" y2="1"><stop offset="0" stop-color="#f4e0b8"/><stop offset="1" stop-color="#e2b878"/></linearGradient></defs>
<rect x="75.3" y="222.50000000000003" width="31.4" height="8.6" fill="url(#bg1)"/>
<rect x="78" y="223.70000000000002" width="4" height="0.8" fill="#c04030"/><rect x="78" y="225.3" width="8" height="0.6" fill="#d08a70"/>
<rect x="84" y="226.70000000000002" width="12" height="0.6" fill="#d09070"/><rect x="80" y="228.20000000000002" width="6" height="0.6" fill="#d09070"/>
<rect x="78" y="229.70000000000002" width="8" height="0.7" fill="#c05040"/><rect x="95" y="229.70000000000002" width="8" height="0.7" fill="#c05040"/>
</svg>
<div style="left:36.6px;top:233.0px;width:589.1999999999999px;height:11.3px;background:#edf8fc"></div>
<div style="left:24.3px;top:233.0px;width:12.3px;height:11.3px;background:#eeeeee"></div>
<div style="left:363px;top:233.0px;width:64.10000000000002px;height:11.3px;background:#ffff00"></div>
<div style="left:579.4px;top:233.0px;width:46.39999999999998px;height:11.3px;background:#9ef2fc"></div>
<div class="n" style="left:30.0576px;top:240.15px;color:#333;font-size:8.2px;transform:translateY(-4px) scaleX(0.72);">3</div>
<div class="n" style="left:38.6px;top:240.15px;color:#222;font-size:8.2px;transform:translateY(-4px) scaleX(0.72);">1O51</div>
<div class="t" style="left:109.5px;top:239.65px;color:#111;font-size:7px;font-weight:700;-webkit-text-stroke-width:0">名片</div>
<div class="t" style="left:159.2px;top:239.65px;color:#222;font-size:6.7px">300g铜版纸名片</div>
<div class="t" style="left:248px;top:239.65px;color:#222;font-size:6.9px;font-weight:400;-webkit-text-stroke-width:0.05px">盒</div>
<div class="n" style="left:284.6608px;top:240.15px;color:#333;font-size:8.2px;transform:translateY(-4px) scaleX(0.72);">O.18 (m)</div>
<div class="n" style="left:331.6608px;top:240.15px;color:#333;font-size:8.2px;transform:translateY(-4px) scaleX(0.72);">O.O6 (m)</div>
<div class="n" style="left:365px;top:240.15px;color:#222;font-size:8.2px;transform:translateY(-4px) scaleX(0.72);">1O.OO</div>
<div class="n" style="left:397.8px;top:240.15px;color:#222;font-size:8.2px;transform:translateY(-4px) scaleX(0.72);">11.OO</div>
<div class="n" style="left:429.1px;top:240.15px;color:#222;font-size:8.2px;transform:translateY(-4px) scaleX(0.72);">11O.OO</div>
<div class="n" style="left:480.7px;top:240.15px;color:#222;font-size:8.2px;transform:translateY(-4px) scaleX(0.72);">1O.OO</div>
<div class="n" style="left:581.4px;top:240.15px;color:#222;font-size:8.2px;transform:translateY(-4px) scaleX(0.72);">O.OO</div>
<svg style="left:0;top:0" width="1" height="1"><g fill="#e8780c"><circle cx="243" cy="236.85" r="1.1"/><circle cx="241.2" cy="239.85" r="1.1"/><circle cx="244.8" cy="239.85" r="1.1"/></g></svg>
<svg style="left:0;top:0" width="1" height="1"><defs><linearGradient id="rg2" x1="0" y1="0" x2="0" y2="1"><stop offset="0" stop-color="#e4402a"/><stop offset="1" stop-color="#b8180e"/></linearGradient></defs>
<rect x="75.3" y="233.8" width="31.4" height="8.6" fill="url(#rg2)"/>
<path d="M75.3 233.8 L79 233.8 L86 242.4 L75.3 242.4 Z" fill="#f0d9a8"/>
<path d="M75.3 242.4 L106.7 242.4 L106.7 241.2 L84 241.2 Z" fill="#e8c890" opacity="0.8"/>
<rect x="80" y="234.8" width="8" height="1" fill="#fff" opacity="0.85"/><rect x="91" y="235.0" width="10" height="0.7" fill="#f4a090"/>
<rect x="85.5" y="237.8" width="4" height="2.6" fill="#f0d040"/><rect x="90.5" y="237.8" width="3.5" height="2.6" fill="#f0d040"/><rect x="95" y="237.8" width="3.5" height="2.6" fill="#f0d040"/><rect x="99.5" y="237.8" width="4" height="2.6" fill="#f0d040"/>
</svg>
<div style="left:36.6px;top:244.3px;width:589.1999999999999px;height:11.3px;background:#fff"></div>
<div style="left:24.3px;top:244.3px;width:12.3px;height:11.3px;background:#eeeeee"></div>
<div style="left:363px;top:244.3px;width:64.10000000000002px;height:11.3px;background:#ffff00"></div>
<div style="left:579.4px;top:244.3px;width:46.39999999999998px;height:11.3px;background:#9ef2fc"></div>
<div class="n" style="left:30.0576px;top:251.45000000000002px;color:#333;font-size:8.2px;transform:translateY(-4px) scaleX(0.72);">4</div>
<div class="n" style="left:38.6px;top:251.45000000000002px;color:#222;font-size:8.2px;transform:translateY(-4px) scaleX(0.72);">1O51</div>
<div class="t" style="left:109.5px;top:250.95000000000002px;color:#111;font-size:7px;font-weight:700;-webkit-text-stroke-width:0">名片</div>
<div class="t" style="left:159.2px;top:250.95000000000002px;color:#222;font-size:6.7px">300g铜版纸名片</div>
<div class="t" style="left:248px;top:250.95000000000002px;color:#222;font-size:6.9px;font-weight:400;-webkit-text-stroke-width:0.05px">盒</div>
<div class="n" style="left:284.6608px;top:251.45000000000002px;color:#333;font-size:8.2px;transform:translateY(-4px) scaleX(0.72);">O.18 (m)</div>
<div class="n" style="left:331.6608px;top:251.45000000000002px;color:#333;font-size:8.2px;transform:translateY(-4px) scaleX(0.72);">O.O6 (m)</div>
<div class="n" style="left:365px;top:251.45000000000002px;color:#222;font-size:8.2px;transform:translateY(-4px) scaleX(0.72);">1O.OO</div>
<div class="n" style="left:397.8px;top:251.45000000000002px;color:#222;font-size:8.2px;transform:translateY(-4px) scaleX(0.72);">11.OO</div>
<div class="n" style="left:429.1px;top:251.45000000000002px;color:#222;font-size:8.2px;transform:translateY(-4px) scaleX(0.72);">11O.OO</div>
<div class="n" style="left:480.7px;top:251.45000000000002px;color:#222;font-size:8.2px;transform:translateY(-4px) scaleX(0.72);">1O.OO</div>
<div class="n" style="left:581.4px;top:251.45000000000002px;color:#222;font-size:8.2px;transform:translateY(-4px) scaleX(0.72);">O.OO</div>
<svg style="left:0;top:0" width="1" height="1"><g fill="#e8780c"><circle cx="243" cy="248.15" r="1.1"/><circle cx="241.2" cy="251.15" r="1.1"/><circle cx="244.8" cy="251.15" r="1.1"/></g></svg>
<svg style="left:0;top:0" width="1" height="1"><defs><linearGradient id="bg3" x1="0" y1="0" x2="1" y2="1"><stop offset="0" stop-color="#f4e0b8"/><stop offset="1" stop-color="#e2b878"/></linearGradient></defs>
<rect x="75.3" y="245.10000000000002" width="31.4" height="8.6" fill="url(#bg3)"/>
<rect x="78" y="246.3" width="4" height="0.8" fill="#c04030"/><rect x="78" y="247.9" width="8" height="0.6" fill="#d08a70"/>
<rect x="84" y="249.3" width="12" height="0.6" fill="#d09070"/><rect x="80" y="250.8" width="6" height="0.6" fill="#d09070"/>
<rect x="78" y="252.3" width="8" height="0.7" fill="#c05040"/><rect x="95" y="252.3" width="8" height="0.7" fill="#c05040"/>
</svg>
<div style="left:36.6px;top:255.60000000000002px;width:589.1999999999999px;height:11.3px;background:#edf8fc"></div>
<div style="left:24.3px;top:255.60000000000002px;width:12.3px;height:11.3px;background:#eeeeee"></div>
<div style="left:363px;top:255.60000000000002px;width:64.10000000000002px;height:11.3px;background:#ffff00"></div>
<div style="left:579.4px;top:255.60000000000002px;width:46.39999999999998px;height:11.3px;background:#9ef2fc"></div>
<div class="n" style="left:30.0576px;top:262.75px;color:#333;font-size:8.2px;transform:translateY(-4px) scaleX(0.72);">5</div>
<div class="n" style="left:38.6px;top:262.75px;color:#222;font-size:8.2px;transform:translateY(-4px) scaleX(0.72);">1O51</div>
<div class="t" style="left:109.5px;top:262.25px;color:#111;font-size:7px;font-weight:700;-webkit-text-stroke-width:0">名片</div>
<div class="t" style="left:159.2px;top:262.25px;color:#222;font-size:6.7px">300g铜版纸名片</div>
<div class="t" style="left:248px;top:262.25px;color:#222;font-size:6.9px;font-weight:400;-webkit-text-stroke-width:0.05px">盒</div>
<div class="n" style="left:284.6608px;top:262.75px;color:#333;font-size:8.2px;transform:translateY(-4px) scaleX(0.72);">O.O9 (m)</div>
<div class="n" style="left:331.6608px;top:262.75px;color:#333;font-size:8.2px;transform:translateY(-4px) scaleX(0.72);">O.O6 (m)</div>
<div class="n" style="left:365px;top:262.75px;color:#222;font-size:8.2px;transform:translateY(-4px) scaleX(0.72);">1O.OO</div>
<div class="n" style="left:397.8px;top:262.75px;color:#222;font-size:8.2px;transform:translateY(-4px) scaleX(0.72);">11.OO</div>
<div class="n" style="left:429.1px;top:262.75px;color:#222;font-size:8.2px;transform:translateY(-4px) scaleX(0.72);">11O.OO</div>
<div class="n" style="left:480.7px;top:262.75px;color:#222;font-size:8.2px;transform:translateY(-4px) scaleX(0.72);">1O.OO</div>
<div class="n" style="left:581.4px;top:262.75px;color:#222;font-size:8.2px;transform:translateY(-4px) scaleX(0.72);">O.OO</div>
<svg style="left:0;top:0" width="1" height="1"><g fill="#e8780c"><circle cx="243" cy="259.45" r="1.1"/><circle cx="241.2" cy="262.45" r="1.1"/><circle cx="244.8" cy="262.45" r="1.1"/></g></svg>
<svg style="left:0;top:0" width="1" height="1"><rect x="83" y="257.1" width="1.5" height="1" fill="#e03040"/><rect x="88" y="257.1" width="5" height="1" fill="#c070c0"/><rect x="86" y="260.1" width="5" height="0.6" fill="#aaa"/><rect x="84" y="262.1" width="9" height="0.6" fill="#bbb"/><circle cx="96.5" cy="262.6" r="1.4" fill="#f05010"/></svg>
<div style="left:36.6px;top:266.9px;width:589.1999999999999px;height:11.3px;background:#fff"></div>
<div style="left:24.3px;top:266.9px;width:12.3px;height:11.3px;background:#eeeeee"></div>
<div style="left:363px;top:266.9px;width:64.10000000000002px;height:11.3px;background:#ffff00"></div>
<div style="left:579.4px;top:266.9px;width:46.39999999999998px;height:11.3px;background:#9ef2fc"></div>
<div class="n" style="left:30.0576px;top:274.04999999999995px;color:#333;font-size:8.2px;transform:translateY(-4px) scaleX(0.72);">6</div>
<div class="n" style="left:38.6px;top:274.04999999999995px;color:#222;font-size:8.2px;transform:translateY(-4px) scaleX(0.72);">1O51</div>
<div class="t" style="left:109.5px;top:273.54999999999995px;color:#111;font-size:7px;font-weight:700;-webkit-text-stroke-width:0">名片</div>
<div class="t" style="left:159.2px;top:273.54999999999995px;color:#222;font-size:6.7px">300g铜版纸名片</div>
<div class="t" style="left:248px;top:273.54999999999995px;color:#222;font-size:6.9px;font-weight:400;-webkit-text-stroke-width:0.05px">盒</div>
<div class="n" style="left:284.6608px;top:274.04999999999995px;color:#333;font-size:8.2px;transform:translateY(-4px) scaleX(0.72);">O.O9 (m)</div>
<div class="n" style="left:331.6608px;top:274.04999999999995px;color:#333;font-size:8.2px;transform:translateY(-4px) scaleX(0.72);">O.O6 (m)</div>
<div class="n" style="left:365px;top:274.04999999999995px;color:#222;font-size:8.2px;transform:translateY(-4px) scaleX(0.72);">1O.OO</div>
<div class="n" style="left:397.8px;top:274.04999999999995px;color:#222;font-size:8.2px;transform:translateY(-4px) scaleX(0.72);">11.OO</div>
<div class="n" style="left:429.1px;top:274.04999999999995px;color:#222;font-size:8.2px;transform:translateY(-4px) scaleX(0.72);">11O.OO</div>
<div class="n" style="left:480.7px;top:274.04999999999995px;color:#222;font-size:8.2px;transform:translateY(-4px) scaleX(0.72);">1O.OO</div>
<div class="n" style="left:581.4px;top:274.04999999999995px;color:#222;font-size:8.2px;transform:translateY(-4px) scaleX(0.72);">O.OO</div>
<svg style="left:0;top:0" width="1" height="1"><g fill="#e8780c"><circle cx="243" cy="270.74999999999994" r="1.1"/><circle cx="241.2" cy="273.74999999999994" r="1.1"/><circle cx="244.8" cy="273.74999999999994" r="1.1"/></g></svg>
<svg style="left:0;top:0" width="1" height="1"><rect x="87" y="268.7" width="5" height="1.4" fill="#e02020"/><rect x="85" y="271.4" width="9" height="0.6" fill="#bbb"/><rect x="84" y="274.4" width="12" height="0.8" fill="#d05050"/></svg>
<div style="left:36.6px;top:278.20000000000005px;width:589.1999999999999px;height:11.3px;background:#edf8fc"></div>
<div style="left:24.3px;top:278.20000000000005px;width:12.3px;height:11.3px;background:#eeeeee"></div>
<div style="left:363px;top:278.20000000000005px;width:64.10000000000002px;height:11.3px;background:#ffff00"></div>
<div style="left:579.4px;top:278.20000000000005px;width:46.39999999999998px;height:11.3px;background:#9ef2fc"></div>
<div class="n" style="left:30.0576px;top:285.35px;color:#333;font-size:8.2px;transform:translateY(-4px) scaleX(0.72);">7</div>
<div class="n" style="left:38.6px;top:285.35px;color:#222;font-size:8.2px;transform:translateY(-4px) scaleX(0.72);">1O51</div>
<div class="t" style="left:109.5px;top:284.85px;color:#111;font-size:7px;font-weight:700;-webkit-text-stroke-width:0">名片</div>
<div class="t" style="left:159.2px;top:284.85px;color:#222;font-size:6.7px">300g铜版纸名片</div>
<div class="t" style="left:248px;top:284.85px;color:#222;font-size:6.9px;font-weight:400;-webkit-text-stroke-width:0.05px">盒</div>
<div class="n" style="left:284.6608px;top:285.35px;color:#333;font-size:8.2px;transform:translateY(-4px) scaleX(0.72);">O.O9 (m)</div>
<div class="n" style="left:331.6608px;top:285.35px;color:#333;font-size:8.2px;transform:translateY(-4px) scaleX(0.72);">O.O6 (m)</div>
<div class="n" style="left:365px;top:285.35px;color:#222;font-size:8.2px;transform:translateY(-4px) scaleX(0.72);">1O.OO</div>
<div class="n" style="left:397.8px;top:285.35px;color:#222;font-size:8.2px;transform:translateY(-4px) scaleX(0.72);">11.OO</div>
<div class="n" style="left:429.1px;top:285.35px;color:#222;font-size:8.2px;transform:translateY(-4px) scaleX(0.72);">11O.OO</div>
<div class="n" style="left:480.7px;top:285.35px;color:#222;font-size:8.2px;transform:translateY(-4px) scaleX(0.72);">1O.OO</div>
<div class="n" style="left:581.4px;top:285.35px;color:#222;font-size:8.2px;transform:translateY(-4px) scaleX(0.72);">O.OO</div>
<svg style="left:0;top:0" width="1" height="1"><g fill="#e8780c"><circle cx="243" cy="282.05" r="1.1"/><circle cx="241.2" cy="285.05" r="1.1"/><circle cx="244.8" cy="285.05" r="1.1"/></g></svg>
<svg style="left:0;top:0" width="1" height="1"><rect x="82" y="280.50000000000006" width="13" height="2.8" fill="#1e4fb0"/><rect x="83" y="281.20000000000005" width="11" height="1" fill="#9ab8f0"/><rect x="95" y="280.70000000000005" width="2.5" height="2.5" fill="#999"/><rect x="83" y="284.20000000000005" width="3" height="0.8" fill="#444"/><rect x="88" y="284.20000000000005" width="7" height="0.6" fill="#aaa"/><rect x="83" y="286.50000000000006" width="14" height="0.6" fill="#999"/></svg>
<div style="left:36.6px;top:289.5px;width:589.1999999999999px;height:11.3px;background:#fff"></div>
<div style="left:24.3px;top:289.5px;width:12.3px;height:11.3px;background:#eeeeee"></div>
<div style="left:363px;top:289.5px;width:64.10000000000002px;height:11.3px;background:#ffff00"></div>
<div style="left:579.4px;top:289.5px;width:46.39999999999998px;height:11.3px;background:#9ef2fc"></div>
<div class="n" style="left:30.0576px;top:296.65px;color:#333;font-size:8.2px;transform:translateY(-4px) scaleX(0.72);">8</div>
<div class="n" style="left:38.6px;top:296.65px;color:#222;font-size:8.2px;transform:translateY(-4px) scaleX(0.72);">1O51</div>
<div class="t" style="left:109.5px;top:296.15px;color:#111;font-size:7px;font-weight:700;-webkit-text-stroke-width:0">名片</div>
<div class="t" style="left:159.2px;top:296.15px;color:#222;font-size:6.7px">300g铜版纸名片</div>
<div class="t" style="left:248px;top:296.15px;color:#222;font-size:6.9px;font-weight:400;-webkit-text-stroke-width:0.05px">盒</div>
<div class="n" style="left:284.6608px;top:296.65px;color:#333;font-size:8.2px;transform:translateY(-4px) scaleX(0.72);">O.O9 (m)</div>
<div class="n" style="left:331.6608px;top:296.65px;color:#333;font-size:8.2px;transform:translateY(-4px) scaleX(0.72);">O.O6 (m)</div>
<div class="n" style="left:365px;top:296.65px;color:#222;font-size:8.2px;transform:translateY(-4px) scaleX(0.72);">1O.OO</div>
<div class="n" style="left:397.8px;top:296.65px;color:#222;font-size:8.2px;transform:translateY(-4px) scaleX(0.72);">11.OO</div>
<div class="n" style="left:429.1px;top:296.65px;color:#222;font-size:8.2px;transform:translateY(-4px) scaleX(0.72);">11O.OO</div>
<div class="n" style="left:480.7px;top:296.65px;color:#222;font-size:8.2px;transform:translateY(-4px) scaleX(0.72);">1O.OO</div>
<div class="n" style="left:581.4px;top:296.65px;color:#222;font-size:8.2px;transform:translateY(-4px) scaleX(0.72);">O.OO</div>
<svg style="left:0;top:0" width="1" height="1"><g fill="#e8780c"><circle cx="243" cy="293.34999999999997" r="1.1"/><circle cx="241.2" cy="296.34999999999997" r="1.1"/><circle cx="244.8" cy="296.34999999999997" r="1.1"/></g></svg>
<svg style="left:0;top:0" width="1" height="1"><rect x="82" y="291.3" width="16.5" height="8.2" fill="#1d4eb4"/><rect x="83.5" y="292.5" width="2.5" height="1.3" fill="#fff"/><circle cx="94.5" cy="296.5" r="2.3" fill="none" stroke="#5a86d8" stroke-width="0.7"/></svg>
<div style="left:36.6px;top:300.8px;width:589.1999999999999px;height:11.3px;background:#edf8fc"></div>
<div style="left:24.3px;top:300.8px;width:12.3px;height:11.3px;background:#eeeeee"></div>
<div style="left:363px;top:300.8px;width:64.10000000000002px;height:11.3px;background:#ffff00"></div>
<div style="left:579.4px;top:300.8px;width:46.39999999999998px;height:11.3px;background:#9ef2fc"></div>
<div class="n" style="left:30.0576px;top:307.95px;color:#333;font-size:8.2px;transform:translateY(-4px) scaleX(0.72);">9</div>
<div class="n" style="left:38.6px;top:307.95px;color:#222;font-size:8.2px;transform:translateY(-4px) scaleX(0.72);">1O51</div>
<div class="t" style="left:109.5px;top:307.45px;color:#111;font-size:7px;font-weight:700;-webkit-text-stroke-width:0">名片</div>
<div class="t" style="left:159.2px;top:307.45px;color:#222;font-size:6.7px">300g铜版纸名片</div>
<div class="t" style="left:248px;top:307.45px;color:#222;font-size:6.9px;font-weight:400;-webkit-text-stroke-width:0.05px">盒</div>
<div class="n" style="left:284.6608px;top:307.95px;color:#333;font-size:8.2px;transform:translateY(-4px) scaleX(0.72);">O.O9 (m)</div>
<div class="n" style="left:331.6608px;top:307.95px;color:#333;font-size:8.2px;transform:translateY(-4px) scaleX(0.72);">O.O6 (m)</div>
<div class="n" style="left:365px;top:307.95px;color:#222;font-size:8.2px;transform:translateY(-4px) scaleX(0.72);">1O.OO</div>
<div class="n" style="left:397.8px;top:307.95px;color:#222;font-size:8.2px;transform:translateY(-4px) scaleX(0.72);">11.OO</div>
<div class="n" style="left:429.1px;top:307.95px;color:#222;font-size:8.2px;transform:translateY(-4px) scaleX(0.72);">11O.OO</div>
<div class="n" style="left:480.7px;top:307.95px;color:#222;font-size:8.2px;transform:translateY(-4px) scaleX(0.72);">1O.OO</div>
<div class="n" style="left:581.4px;top:307.95px;color:#222;font-size:8.2px;transform:translateY(-4px) scaleX(0.72);">O.OO</div>
<svg style="left:0;top:0" width="1" height="1"><g fill="#e8780c"><circle cx="243" cy="304.65" r="1.1"/><circle cx="241.2" cy="307.65" r="1.1"/><circle cx="244.8" cy="307.65" r="1.1"/></g></svg>
<svg style="left:0;top:0" width="1" height="1"><rect x="82" y="303.1" width="13" height="2.8" fill="#1e4fb0"/><rect x="83" y="303.8" width="11" height="1" fill="#9ab8f0"/><rect x="95" y="303.3" width="2.5" height="2.5" fill="#999"/><rect x="83" y="306.8" width="3" height="0.8" fill="#444"/><rect x="88" y="306.8" width="7" height="0.6" fill="#aaa"/><rect x="83" y="309.1" width="14" height="0.6" fill="#999"/></svg>
<div style="left:36.6px;top:312.1px;width:589.1999999999999px;height:11.3px;background:#fff"></div>
<div style="left:24.3px;top:312.1px;width:12.3px;height:11.3px;background:#eeeeee"></div>
<div style="left:363px;top:312.1px;width:64.10000000000002px;height:11.3px;background:#ffff00"></div>
<div style="left:579.4px;top:312.1px;width:46.39999999999998px;height:11.3px;background:#9ef2fc"></div>
<div class="n" style="left:26.515200000000004px;top:319.25px;color:#333;font-size:8.2px;transform:translateY(-4px) scaleX(0.72);">1O</div>
<div class="n" style="left:38.6px;top:319.25px;color:#222;font-size:8.2px;transform:translateY(-4px) scaleX(0.72);">1O51</div>
<div class="t" style="left:109.5px;top:318.75px;color:#111;font-size:7px;font-weight:700;-webkit-text-stroke-width:0">名片</div>
<div class="t" style="left:159.2px;top:318.75px;color:#222;font-size:6.7px">300g铜版纸名片</div>
<div class="t" style="left:248px;top:318.75px;color:#222;font-size:6.9px;font-weight:400;-webkit-text-stroke-width:0.05px">盒</div>
<div class="n" style="left:284.6608px;top:319.25px;color:#333;font-size:8.2px;transform:translateY(-4px) scaleX(0.72);">O.O9 (m)</div>
<div class="n" style="left:331.6608px;top:319.25px;color:#333;font-size:8.2px;transform:translateY(-4px) scaleX(0.72);">O.O6 (m)</div>
<div class="n" style="left:365px;top:319.25px;color:#222;font-size:8.2px;transform:translateY(-4px) scaleX(0.72);">1O.OO</div>
<div class="n" style="left:397.8px;top:319.25px;color:#222;font-size:8.2px;transform:translateY(-4px) scaleX(0.72);">11.OO</div>
<div class="n" style="left:429.1px;top:319.25px;color:#222;font-size:8.2px;transform:translateY(-4px) scaleX(0.72);">11O.OO</div>
<div class="n" style="left:480.7px;top:319.25px;color:#222;font-size:8.2px;transform:translateY(-4px) scaleX(0.72);">1O.OO</div>
<div class="n" style="left:581.4px;top:319.25px;color:#222;font-size:8.2px;transform:translateY(-4px) scaleX(0.72);">O.OO</div>
<svg style="left:0;top:0" width="1" height="1"><g fill="#e8780c"><circle cx="243" cy="315.95" r="1.1"/><circle cx="241.2" cy="318.95" r="1.1"/><circle cx="244.8" cy="318.95" r="1.1"/></g></svg>
<svg style="left:0;top:0" width="1" height="1"><rect x="82" y="313.90000000000003" width="16.5" height="8.2" fill="#1d4eb4"/><rect x="83.5" y="315.1" width="2.5" height="1.3" fill="#fff"/><circle cx="94.5" cy="319.1" r="2.3" fill="none" stroke="#5a86d8" stroke-width="0.7"/></svg>
<div style="left:36.6px;top:323.4px;width:589.1999999999999px;height:11.3px;background:#edf8fc"></div>
<div style="left:24.3px;top:323.4px;width:12.3px;height:11.3px;background:#eeeeee"></div>
<div style="left:363px;top:323.4px;width:64.10000000000002px;height:11.3px;background:#ffff00"></div>
<div style="left:579.4px;top:323.4px;width:46.39999999999998px;height:11.3px;background:#9ef2fc"></div>
<div class="n" style="left:26.515200000000004px;top:330.54999999999995px;color:#333;font-size:8.2px;transform:translateY(-4px) scaleX(0.72);">11</div>
<div class="n" style="left:38.6px;top:330.54999999999995px;color:#222;font-size:8.2px;transform:translateY(-4px) scaleX(0.72);">1O51</div>
<div class="t" style="left:109.5px;top:330.04999999999995px;color:#111;font-size:7px;font-weight:700;-webkit-text-stroke-width:0">名片</div>
<div class="t" style="left:159.2px;top:330.04999999999995px;color:#222;font-size:6.7px">300g铜版纸名片</div>
<div class="t" style="left:248px;top:330.04999999999995px;color:#222;font-size:6.9px;font-weight:400;-webkit-text-stroke-width:0.05px">盒</div>
<div class="n" style="left:284.6608px;top:330.54999999999995px;color:#333;font-size:8.2px;transform:translateY(-4px) scaleX(0.72);">O.O9 (m)</div>
<div class="n" style="left:331.6608px;top:330.54999999999995px;color:#333;font-size:8.2px;transform:translateY(-4px) scaleX(0.72);">O.O6 (m)</div>
<div class="n" style="left:365px;top:330.54999999999995px;color:#222;font-size:8.2px;transform:translateY(-4px) scaleX(0.72);">1O.OO</div>
<div class="n" style="left:397.8px;top:330.54999999999995px;color:#222;font-size:8.2px;transform:translateY(-4px) scaleX(0.72);">11.OO</div>
<div class="n" style="left:429.1px;top:330.54999999999995px;color:#222;font-size:8.2px;transform:translateY(-4px) scaleX(0.72);">11O.OO</div>
<div class="n" style="left:480.7px;top:330.54999999999995px;color:#222;font-size:8.2px;transform:translateY(-4px) scaleX(0.72);">1O.OO</div>
<div class="n" style="left:581.4px;top:330.54999999999995px;color:#222;font-size:8.2px;transform:translateY(-4px) scaleX(0.72);">O.OO</div>
<svg style="left:0;top:0" width="1" height="1"><g fill="#e8780c"><circle cx="243" cy="327.24999999999994" r="1.1"/><circle cx="241.2" cy="330.24999999999994" r="1.1"/><circle cx="244.8" cy="330.24999999999994" r="1.1"/></g></svg>
<svg style="left:0;top:0" width="1" height="1"><rect x="82" y="325.59999999999997" width="16.5" height="1.6" fill="#30b040"/><rect x="82" y="327.0" width="16.5" height="0.5" fill="#d8e060"/><rect x="88" y="328.9" width="4" height="0.8" fill="#777"/><rect x="82" y="331.59999999999997" width="16.5" height="1.6" fill="#30b040"/></svg>
<div style="left:36.6px;top:334.70000000000005px;width:589.1999999999999px;height:11.3px;background:#fff"></div>
<div style="left:24.3px;top:334.70000000000005px;width:12.3px;height:11.3px;background:#eeeeee"></div>
<div style="left:363px;top:334.70000000000005px;width:64.10000000000002px;height:11.3px;background:#ffff00"></div>
<div style="left:579.4px;top:334.70000000000005px;width:46.39999999999998px;height:11.3px;background:#9ef2fc"></div>
<div class="n" style="left:26.515200000000004px;top:341.85px;color:#333;font-size:8.2px;transform:translateY(-4px) scaleX(0.72);">12</div>
<div class="n" style="left:38.6px;top:341.85px;color:#222;font-size:8.2px;transform:translateY(-4px) scaleX(0.72);">1O51</div>
<div class="t" style="left:109.5px;top:341.35px;color:#111;font-size:7px;font-weight:700;-webkit-text-stroke-width:0">名片</div>
<div class="t" style="left:159.2px;top:341.35px;color:#222;font-size:6.7px">300g铜版纸名片</div>
<div class="t" style="left:248px;top:341.35px;color:#222;font-size:6.9px;font-weight:400;-webkit-text-stroke-width:0.05px">盒</div>
<div class="n" style="left:284.6608px;top:341.85px;color:#333;font-size:8.2px;transform:translateY(-4px) scaleX(0.72);">O.O9 (m)</div>
<div class="n" style="left:331.6608px;top:341.85px;color:#333;font-size:8.2px;transform:translateY(-4px) scaleX(0.72);">O.O6 (m)</div>
<div class="n" style="left:365px;top:341.85px;color:#222;font-size:8.2px;transform:translateY(-4px) scaleX(0.72);">1O.OO</div>
<div class="n" style="left:397.8px;top:341.85px;color:#222;font-size:8.2px;transform:translateY(-4px) scaleX(0.72);">11.OO</div>
<div class="n" style="left:429.1px;top:341.85px;color:#222;font-size:8.2px;transform:translateY(-4px) scaleX(0.72);">11O.OO</div>
<div class="n" style="left:480.7px;top:341.85px;color:#222;font-size:8.2px;transform:translateY(-4px) scaleX(0.72);">1O.OO</div>
<div class="n" style="left:581.4px;top:341.85px;color:#222;font-size:8.2px;transform:translateY(-4px) scaleX(0.72);">O.OO</div>
<svg style="left:0;top:0" width="1" height="1"><g fill="#e8780c"><circle cx="243" cy="338.55" r="1.1"/><circle cx="241.2" cy="341.55" r="1.1"/><circle cx="244.8" cy="341.55" r="1.1"/></g></svg>
<svg style="left:0;top:0" width="1" height="1"><circle cx="84" cy="337.70000000000005" r="0.9" fill="#30a050"/><rect x="86" y="337.20000000000005" width="5" height="0.7" fill="#888"/><rect x="93" y="336.70000000000005" width="3" height="0.6" fill="#aaa"/><rect x="87" y="339.70000000000005" width="4" height="0.6" fill="#999"/><rect x="83.5" y="342.70000000000005" width="13" height="1.1" fill="#222"/></svg>
<div style="left:24.3px;top:209.9px;width:601.5px;height:1px;background:#d2d2d2"></div>
<div style="left:24.3px;top:221.20000000000002px;width:601.5px;height:1px;background:#d2d2d2"></div>
<div style="left:24.3px;top:232.5px;width:601.5px;height:1px;background:#d2d2d2"></div>
<div style="left:24.3px;top:243.8px;width:601.5px;height:1px;background:#d2d2d2"></div>
<div style="left:24.3px;top:255.10000000000002px;width:601.5px;height:1px;background:#d2d2d2"></div>
<div style="left:24.3px;top:266.4px;width:601.5px;height:1px;background:#d2d2d2"></div>
<div style="left:24.3px;top:277.70000000000005px;width:601.5px;height:1px;background:#d2d2d2"></div>
<div style="left:24.3px;top:289.0px;width:601.5px;height:1px;background:#d2d2d2"></div>
<div style="left:24.3px;top:300.3px;width:601.5px;height:1px;background:#d2d2d2"></div>
<div style="left:24.3px;top:311.6px;width:601.5px;height:1px;background:#d2d2d2"></div>
<div style="left:24.3px;top:322.9px;width:601.5px;height:1px;background:#d2d2d2"></div>
<div style="left:24.3px;top:334.20000000000005px;width:601.5px;height:1px;background:#d2d2d2"></div>
<div style="left:24.3px;top:345.5px;width:601.5px;height:1px;background:#d2d2d2"></div>
<div style="left:24.3px;top:198.8px;width:601.5px;height:1px;background:#d2d2d2"></div>
<div style="left:23.8px;top:198.8px;width:1px;height:147.2px;background:#d2d2d2"></div>
<div style="left:36.1px;top:198.8px;width:1px;height:147.2px;background:#d2d2d2"></div>
<div style="left:74.0px;top:198.8px;width:1px;height:147.2px;background:#d2d2d2"></div>
<div style="left:106.8px;top:198.8px;width:1px;height:147.2px;background:#d2d2d2"></div>
<div style="left:157.3px;top:198.8px;width:1px;height:147.2px;background:#d2d2d2"></div>
<div style="left:237.9px;top:198.8px;width:1px;height:147.2px;background:#d2d2d2"></div>
<div style="left:268.9px;top:198.8px;width:1px;height:147.2px;background:#d2d2d2"></div>
<div style="left:315.7px;top:198.8px;width:1px;height:147.2px;background:#d2d2d2"></div>
<div style="left:362.5px;top:198.8px;width:1px;height:147.2px;background:#d2d2d2"></div>
<div style="left:395.3px;top:198.8px;width:1px;height:147.2px;background:#d2d2d2"></div>
<div style="left:426.6px;top:198.8px;width:1px;height:147.2px;background:#d2d2d2"></div>
<div style="left:478.2px;top:198.8px;width:1px;height:147.2px;background:#d2d2d2"></div>
<div style="left:511.5px;top:198.8px;width:1px;height:147.2px;background:#d2d2d2"></div>
<div style="left:578.9px;top:198.8px;width:1px;height:147.2px;background:#d2d2d2"></div>
<div style="left:625.3px;top:198.8px;width:1px;height:147.2px;background:#d2d2d2"></div>
<div style="left:24.8px;top:452.8px;width:601.5px;height:11.6px;background:#ececec;border-top:1px solid #c8c8c8;border-bottom:1px solid #c8c8c8"></div>
<div style="left:37.7px;top:453.9px;width:35.5px;height:9.6px;background:#f7f7f7;border-top:1px solid #9a9a9a;border-left:1px solid #9a9a9a;border-right:1px solid #fff;border-bottom:1px solid #fff"></div>
<div style="left:36.2px;top:452.8px;width:0.8px;height:11.6px;background:#c8c8c8"></div>
<div class="t" style="left:39.8px;top:460.0px;color:#222;font-size:6.5px">共<span style='font-family:Liberation Mono;font-size:6.2px;letter-spacing:-0.8px'>12</span>个项目</div>
<div style="left:362.5px;top:453.7px;width:33px;height:9.4px;background:#f5f5f5;border-top:1px solid #aaa;border-left:1px solid #aaa"></div>
<div class="n" style="left:364px;top:460.0px;color:#222;font-size:8.2px;transform:translateY(-4px) scaleX(0.72);">12O.OO</div>
<div style="left:427px;top:453.7px;width:51.3px;height:9.4px;background:#f0f0f0;border-top:1px solid #aaa;border-left:1px solid #aaa"></div>
<div class="n" style="left:452.2032px;top:460.0px;color:#222;font-size:8.2px;transform:translateY(-4px) scaleX(0.72);">132O.OO</div>
<div style="left:580.2px;top:453.7px;width:46px;height:9.4px;background:#9ef2fc;border:1px solid #b8c8cc"></div>
<div class="n" style="left:582px;top:460.0px;color:#222;font-size:8.2px;transform:translateY(-4px) scaleX(0.72);">O.OO</div>
<div style="left:27.4px;top:470px;width:214px;height:35px;border:1px solid #e3e8ee;border-radius:3px"></div>
<div style="left:246.4px;top:470px;width:382px;height:35px;border:1px solid #e3e8ee;border-radius:3px"></div>
<div style="left:634px;top:470px;width:225.5px;height:36.5px;border:1px solid #e3e8ee;border-radius:3px"></div>
<div style="left:33.5px;top:466px;width:29px;height:8px;background:#fff"></div>
<div class="t" style="left:34.5px;top:471.0px;color:#f4501a;font-size:6.6px;font-weight:500;-webkit-text-stroke-width:0.2px">本单合计</div>
<div style="left:250.5px;top:466px;width:15px;height:8px;background:#fff"></div>
<div class="t" style="left:251.5px;top:471.0px;color:#f4501a;font-size:6.6px;font-weight:500;-webkit-text-stroke-width:0.2px">收款</div>
<div style="left:638.6px;top:466px;width:15px;height:8px;background:#fff"></div>
<div class="t" style="left:639.6px;top:471.0px;color:#f4501a;font-size:6.6px;font-weight:500;-webkit-text-stroke-width:0.2px">交货</div>
<div class="t" style="left:34.6px;top:482.2px;color:#333;font-size:6.7px">总金额</div>
<div class="n" style="left:64.5px;top:482.7px;color:#333;font-size:8.2px;transform:translateY(-4px) scaleX(0.72);">132O.OO</div>
<div class="t" style="left:117.5px;top:482.2px;color:#333;font-size:6.5px">整单折扣<span style='font-size:5px'>(%)</span></div>
<div class="n" style="left:156.5px;top:482.7px;color:#333;font-size:8.2px;transform:translateY(-4px) scaleX(0.72);">1OO.O</div>
<div style="left:156px;top:486px;width:78.6px;height:1.2px;background:#b8b8b8"></div>
<div class="t" style="left:34.6px;top:496.2px;color:#333;font-size:6.7px">成交金额</div>
<div class="n" style="left:64.5px;top:496.7px;color:#3a9ad8;font-size:8.2px;transform:translateY(-4px) scaleX(0.72);">132O.OO</div>
<div style="left:63.7px;top:500px;width:49.6px;height:1.2px;background:#b8b8b8"></div>
<div class="t" style="left:117.5px;top:496.2px;color:#333;font-size:6.7px">优 惠</div>
<div class="n" style="left:156.5px;top:496.7px;color:#e83030;font-size:8.2px;transform:translateY(-4px) scaleX(0.72);">O.OO</div>
<div style="left:156px;top:500px;width:36px;height:1.2px;background:#b8b8b8"></div>
<div style="left:196.8px;top:490.2px;width:39.8px;height:10.6px;border:1px solid #4a4a4a;background:#fff;border-radius:1px"></div>
<svg style="left:0;top:0" width="868" height="525"><rect x="199" y="492" width="6.5" height="7" fill="#22a030"/><text x="202.25" y="498.2" font-size="6.4" fill="#fff" text-anchor="middle" font-family="Liberation Sans" font-weight="bold">$</text></svg>
<div class="t" style="left:208.3px;top:496.6px;color:#222;font-size:6.6px">取整<span style='font-family:Liberation Mono;font-size:6px;letter-spacing:-0.6px'>(F7)</span></div>
<div class="t" style="left:252.5px;top:482.2px;color:#333;font-size:6.7px">收款方式</div>
<div class="t" style="left:282.5px;top:482.2px;color:#222;font-size:6.7px">公司现金</div>
<div style="left:282px;top:486px;width:148px;height:1.2px;background:#b8b8b8"></div>
<div class="t" style="left:252.5px;top:496.2px;color:#333;font-size:6.7px">收款金额</div>
<div class="n" style="left:282.5px;top:496.7px;color:#333;font-size:8.2px;transform:translateY(-4px) scaleX(0.72);">O.OO</div>
<div style="left:282px;top:500px;width:148px;height:1.2px;background:#b8b8b8"></div>
<div class="t" style="left:438.5px;top:482.2px;color:#333;font-size:6.5px">收款率<span style='font-size:5px'>(%)</span></div>
<div class="n" style="left:477px;top:482.7px;color:#333;font-size:8.2px;transform:translateY(-4px) scaleX(0.72);">O.O</div>
<div style="left:477px;top:486px;width:145.7px;height:1.2px;background:#b8b8b8"></div>
<div class="t" style="left:434.6px;top:497.0px;color:#333;font-size:6.3px">余款支付日期</div>
<div style="left:476.2px;top:491.3px;width:146.5px;height:10.3px;background:#ff8205"></div>
<div class="t" style="left:639.6px;top:482.2px;color:#333;font-size:6.7px">交货方式</div>
<div style="left:668.4px;top:486px;width:183.6px;height:1.2px;background:#b8b8b8"></div>
<div class="t" style="left:639.6px;top:497.0px;color:#333;font-size:6.7px">交货日期</div>
<div style="left:668.4px;top:491px;width:125.3px;height:10.6px;background:#ff8205"></div>
<div class="n" style="left:754px;top:497.5px;color:#111;font-size:8.2px;transform:translateY(-4px) scaleX(0.7);">2O16/6/29</div>
<div style="left:797.8px;top:491px;width:46.6px;height:10.6px;background:#ff8205"></div>
<div class="n" style="left:799.5px;top:497.5px;color:#111;font-size:8.2px;transform:translateY(-4px) scaleX(0.7);">15:16</div>
<div style="left:844.4px;top:491px;width:8px;height:10.6px;background:#f2f2f2;border:1px solid #bbb"></div>
<svg style="left:0;top:0" width="868" height="525"><path d="M846.8 495 l1.6 -1.8 l1.6 1.8 M846.8 497.5 l1.6 1.8 l1.6 -1.8" stroke="#666" stroke-width="0.6" fill="none"/></svg>
<svg style="left:0;top:0" width="868" height="525"><path d="M616 495.8 h3.4 l-1.7 2 z" fill="#111"/><path d="M788 495.8 h3.4 l-1.7 2 z" fill="#111"/></svg>
<div style="left:0px;top:509.5px;width:868px;height:15.5px;background:#2c3039;border-top:1px solid #1a1e26"></div>
<svg style="left:0;top:0" width="868" height="525">
<path d="M5 514.5 h7 l-2 -1.5 M12 518.5 h-7 l2 1.5" stroke="#ddd" stroke-width="0.9" fill="none"/>
<circle cx="21.5" cy="518" r="2" fill="none" stroke="#f0c000" stroke-width="1"/><circle cx="24.5" cy="515" r="2" fill="none" stroke="#f0c000" stroke-width="1"/>
<rect x="89.5" y="513" width="8" height="2" fill="#f0c000"/><rect x="89.5" y="515.8" width="8" height="2" fill="#f0c000"/><rect x="89.5" y="518.6" width="8" height="2" fill="#f0c000"/>
<rect x="192.8" y="513" width="8.4" height="7" rx="1" fill="#f2c200"/><path d="M194 516 h6 M194 518 h6" stroke="#5a4a00" stroke-width="0.6"/>
<path d="M296.8 516.3 l2.4 2.6 l4.4 -5" stroke="#f4c800" stroke-width="1.8" fill="none"/>
<path d="M373.3 512.5 v4.5 M371 515 l2.3 2.3 l2.3 -2.3 M369.5 519.8 h7.5" stroke="#f0c000" stroke-width="1.3" fill="none"/>
<circle cx="416.5" cy="515" r="2.3" fill="#f0c000"/><path d="M412 521 q4.5 -5 9 0 z" fill="#f0c000"/>
<rect x="456.5" y="516" width="6" height="5" fill="#f0c000"/><path d="M457.8 516 v-1.5 a1.7 1.7 0 0 1 3.4 0 v1.5" stroke="#f0c000" stroke-width="1" fill="none"/>
<circle cx="779.3" cy="516.8" r="4" fill="none" stroke="#f0c000" stroke-width="0.9"/><circle cx="779.3" cy="515.5" r="1.3" fill="#f0c000"/><path d="M777 519 q2.3 -2.5 4.6 0 z" fill="#f0c000"/>
<path d="M822 515.5 h6 l-1.5 -1.5 M830 518.5 h-6 l1.5 1.5" stroke="#f0c000" stroke-width="1.4" fill="none"/>
</svg>
<div class="t" style="left:30.2px;top:517.8px;color:#a8d820;font-size:6.7px">网络情况<span style='font-size:7.5px'>:</span>良好</div>
<div class="t" style="left:100.8px;top:517.8px;color:#e0e0e0;font-size:6.7px">服务器</div>
<div class="t" style="left:204.5px;top:517.8px;color:#e8e8e8;font-size:6.7px">账套<span style='font-size:7px'>:</span>&nbsp;&nbsp;演示账套</div>
<div class="t" style="left:307.6px;top:517.8px;color:#a8d820;font-size:6.7px">正版授权|终身使用</div>
<div class="t" style="left:381px;top:517.8px;color:#e0e0e0;font-size:6.7px">导入证书</div>
<div class="t" style="left:423.7px;top:517.8px;color:#e0e0e0;font-size:6.7px">在线客服</div>
<div class="t" style="left:466px;top:517.8px;color:#e0e0e0;font-size:6.7px">锁屏</div>
<div class="t" style="left:786.5px;top:517.8px;color:#e0e0e0;font-size:6.7px">超级用户</div>
<div class="t" style="left:833.4px;top:517.8px;color:#e0e0e0;font-size:6.7px">切换用户</div>
<div class="n" style="left:121px;top:518.3px;color:#e0e0e0;font-size:7.6px;transform:translateY(-4px) scaleX(0.79);">:127.O.O.1:7798</div>
</body></html>
